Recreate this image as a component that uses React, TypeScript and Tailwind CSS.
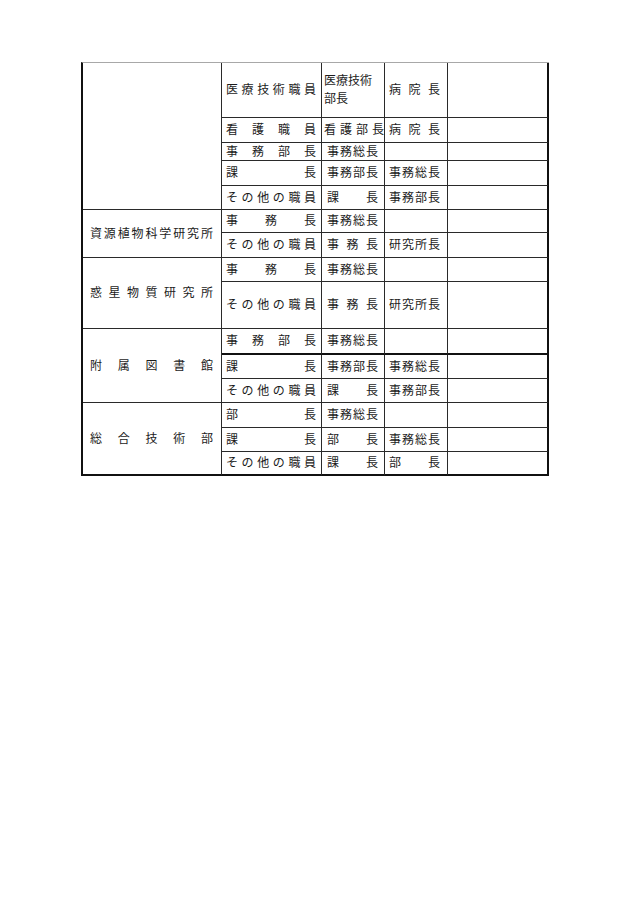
import type { ReactNode } from 'react';

// ---------------------------------------------------------------------------
// Helpers
// ---------------------------------------------------------------------------

// 均等割り付け: each character spread across the cell width
function Spread({ text, className = '' }: { text: string; className?: string }) {
  return (
    <div className={`flex w-full justify-between ${className}`}>
      {Array.from(text).map((ch, i) => (
        <span key={i}>{ch}</span>
      ))}
    </div>
  );
}

type CellProps = {
  children?: ReactNode;
  className?: string;
};

function Cell({ children, className = '' }: CellProps) {
  return (
    <div className={`flex items-center border-r border-b border-[#2a2a2a] ${className}`}>
      {children}
    </div>
  );
}

// ---------------------------------------------------------------------------
// Data
// ---------------------------------------------------------------------------

type Row = {
  staff: string;
  first: ReactNode;
  second: string;
};

const rows: Row[] = [
  {
    staff: '医療技術職員',
    first: (
      <div className="pl-[2px] leading-[18px]">
        医療技術
        <br />
        部長
      </div>
    ),
    second: '病院長',
  },
  { staff: '看護職員', first: <Spread text="看護部長" className="pl-[2px]" />, second: '病院長' },
  { staff: '事務部長', first: '事務総長', second: '' },
  { staff: '課長', first: '事務部長', second: '事務総長' },
  { staff: 'その他の職員', first: '課長', second: '事務部長' },
  { staff: '事務長', first: '事務総長', second: '' },
  { staff: 'その他の職員', first: '事務長', second: '研究所長' },
  { staff: '事務長', first: '事務総長', second: '' },
  { staff: 'その他の職員', first: '事務長', second: '研究所長' },
  { staff: '事務部長', first: '事務総長', second: '' },
  { staff: '課長', first: '事務部長', second: '事務総長' },
  { staff: 'その他の職員', first: '課長', second: '事務部長' },
  { staff: '部長', first: '事務総長', second: '' },
  { staff: '課長', first: '部長', second: '事務総長' },
  { staff: 'その他の職員', first: '課長', second: '部長' },
];

// organisation name cells in column 1, keyed by first row index
const groups: Record<number, { name: string; span: string; className?: string }> = {
  0: { name: '', span: 'row-span-5' },
  5: { name: '資源植物科学研究所', span: 'row-span-2' },
  7: { name: '惑星物質研究所', span: 'row-span-2' },
  9: { name: '附属図書館', span: 'row-span-3' },
  12: { name: '総合技術部', span: 'row-span-3', className: 'border-b-2 border-b-[#111]' },
};

// ---------------------------------------------------------------------------
// Component
// ---------------------------------------------------------------------------

export default function App() {
  return (
    <div className="min-h-[903px] w-[630px] bg-white pt-[62px] pl-[81px] font-['Liberation_Serif','Noto_Sans_CJK_JP',serif] text-[12px] leading-none text-[#1c1c1c]">
      <div className="grid w-[468px] grid-cols-[139px_100px_63px_63px_101px] grid-rows-[55px_25px_18px_25px_24px_23px_25px_24px_47px_26px_24px_24px_25px_24px_24px] border-t border-l-2 border-t-[#a8a8a8] border-l-[#111]">
        {rows.map((row, i) => {
          const group = groups[i];
          const thick =
            i === 9 || i === rows.length - 1 ? 'border-b-2 border-b-[#111]' : '';
          return [
            group && (
              <Cell key={`g${i}`} className={`${group.span} pl-[7px] pr-[8px] ${group.className ?? ''}`}>
                {group.name && <Spread text={group.name} />}
              </Cell>
            ),
            <Cell key={`s${i}`} className={`pl-[4px] pr-[5px] ${thick}`}>
              <Spread text={row.staff} />
            </Cell>,
            <Cell key={`a${i}`} className={`${thick} ${typeof row.first === 'string' ? 'pl-[5px] pr-[6px]' : ''}`}>
              {typeof row.first === 'string' ? <Spread text={row.first} /> : row.first}
            </Cell>,
            <Cell key={`b${i}`} className={`pl-[4px] pr-[7px] ${thick}`}>
              {row.second && <Spread text={row.second} />}
            </Cell>,
            <Cell key={`c${i}`} className={`border-r-2 border-r-[#111] ${thick}`} />,
          ];
        })}
      </div>
    </div>
  );
}
